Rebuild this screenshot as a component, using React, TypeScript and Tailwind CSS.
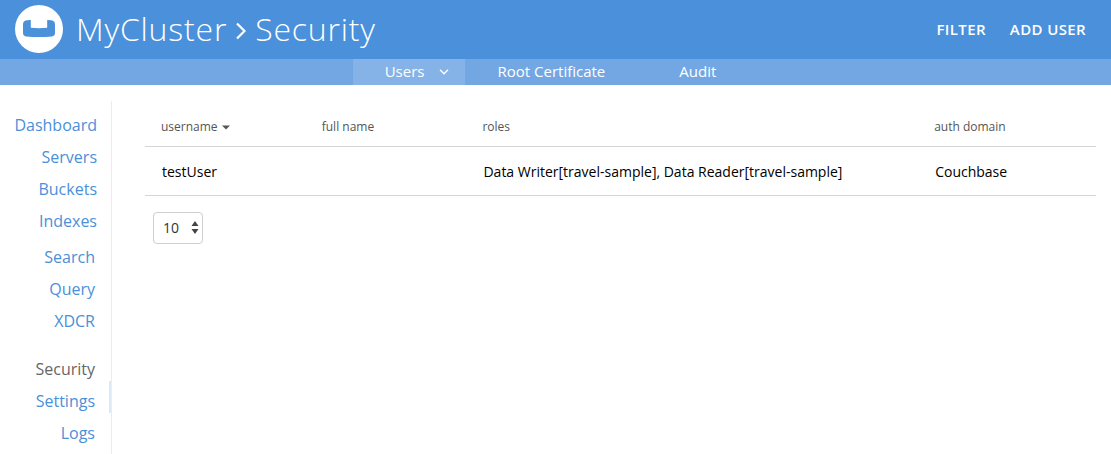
type NavItem = { label: string; current?: boolean; marked?: boolean };
type NavGroup = { spacing: string; linkPadding: string; items: NavItem[] };

const navGroups: NavGroup[] = [
  {
    spacing: "",
    linkPadding: "pr-3",
    items: [{ label: "Dashboard" }, { label: "Servers" }, { label: "Buckets" }, { label: "Indexes" }],
  },
  {
    spacing: "mt-1",
    linkPadding: "pr-[14px]",
    items: [{ label: "Search" }, { label: "Query" }, { label: "XDCR" }],
  },
  {
    spacing: "mt-4",
    linkPadding: "pr-[14px]",
    items: [{ label: "Security", current: true }, { label: "Settings", marked: true }, { label: "Logs" }],
  },
];

const users = [
  {
    username: "testUser",
    fullName: "",
    roles: "Data Writer[travel-sample], Data Reader[travel-sample]",
    domain: "Couchbase",
  },
];

function Logo() {
  return (
    <svg viewBox="0 0 48 48" className="size-12 shrink-0" role="img" aria-label="Couchbase">
      <circle cx="24" cy="24" r="24" fill="#fff" />
      <path
        d="M10.5 15.4 Q13 14.8 15.8 15 V22.8 Q24 23.6 32.2 22.8 V15 Q35 14.8 37.5 15.4 Q40 16 40 19 V28 Q40 31 37 31.4 Q24 32.6 11 31.4 Q8 31 8 28 V19 Q8 16 10.5 15.4 Z"
        fill="#4a90da"
      />
    </svg>
  );
}

function Header() {
  return (
    <header className="flex h-[59px] items-center bg-[#4a90da] pr-[25px] pb-px pl-[15px] text-white">
      <Logo />
      <h1 className="ml-[13px] flex items-center text-[32px] leading-[38px] font-light tracking-wide">
        MyCluster
        <svg
          viewBox="0 0 12 18"
          className="mx-2 mt-1 h-[18px] w-3"
          fill="none"
          stroke="#fff"
          strokeWidth="2.2"
          aria-hidden="true"
        >
          <path d="M2 1.5 L9.5 9 L2 16.5" />
        </svg>
        Security
      </h1>
      <div className="ml-auto flex gap-6 text-[15px] leading-5 font-semibold tracking-wide">
        <button type="button">FILTER</button>
        <button type="button">ADD USER</button>
      </div>
    </header>
  );
}

function Tabs() {
  return (
    <nav
      aria-label="Security sections"
      className="flex justify-center bg-[#73a7e3] pr-[6px] pb-[2px] text-[15px] leading-6 text-white"
    >
      <a href="#users" aria-current="page" className="-mb-[2px] flex items-center bg-[#85b3e7] pr-4 pb-[2px] pl-8">
        Users
        <svg
          viewBox="0 0 10 6"
          className="mt-[2px] ml-[15px] h-[6px] w-[10px]"
          fill="none"
          stroke="#fff"
          strokeWidth="1.3"
          aria-hidden="true"
        >
          <path d="M1 0.8 L5 4.8 L9 0.8" />
        </svg>
      </a>
      <a href="#root-certificate" className="pr-9 pl-8">Root Certificate</a>
      <a href="#audit" className="pr-9 pl-[38px]">Audit</a>
    </nav>
  );
}

function Sidebar() {
  return (
    <nav aria-label="Main" className="mt-4 w-28 shrink-0 border-r border-[#ececec] pt-1 text-right text-base">
      {navGroups.map((group) => (
        <ul key={group.items[0].label} className={group.spacing}>
          {group.items.map((item) => (
            <li
              key={item.label}
              className={item.marked ? "border-r-2 border-[#dce9f8]" : "border-r-2 border-transparent"}
            >
              <a
                href={"#" + item.label.toLowerCase()}
                aria-current={item.current ? "page" : undefined}
                className={
                  "block pt-2 leading-6 " + group.linkPadding + (item.current ? " text-[#666]" : " text-[#4a90da]")
                }
              >
                {item.label}
              </a>
            </li>
          ))}
        </ul>
      ))}
    </nav>
  );
}

export default function App() {
  return (
    <div className="flex min-h-screen flex-col bg-white font-['Open_Sans',sans-serif]">
      <Header />
      <Tabs />
      <div className="flex flex-1">
        <Sidebar />
        <main className="min-w-0 flex-1 pt-[22px] pr-[15px] pl-[33px]">
          <table className="w-full table-fixed border-collapse text-left">
            <colgroup>
              <col className="w-[16.9%]" />
              <col className="w-[16.9%]" />
              <col className="w-[47.5%]" />
              <col />
            </colgroup>
            <thead>
              <tr className="h-[39px] border-b border-[#d4d4d4] text-xs text-[#555]">
                <th scope="col" aria-sort="descending" className="pt-[2px] pl-4 font-normal">
                  <button type="button" className="flex items-center gap-1">
                    username
                    <svg viewBox="0 0 8 5" className="h-[5px] w-2" fill="#555" aria-hidden="true">
                      <path d="M0 0.5 H8 L4 4.5 Z" />
                    </svg>
                  </button>
                </th>
                <th scope="col" className="pt-[2px] pl-4 font-normal">full name</th>
                <th scope="col" className="pt-[2px] pl-4 font-normal">roles</th>
                <th scope="col" className="pt-[2px] pl-4 font-normal">auth domain</th>
              </tr>
            </thead>
            <tbody>
              {users.map((user) => (
                <tr key={user.username} className="h-[49px] border-b border-[#d4d4d4] text-sm text-black">
                  <td className="pt-[2px] pl-[17px]">{user.username}</td>
                  <td className="pt-[2px] pl-[17px]">{user.fullName}</td>
                  <td className="pt-[2px] pl-[17px]">{user.roles}</td>
                  <td className="pt-[2px] pl-[17px]">{user.domain}</td>
                </tr>
              ))}
            </tbody>
          </table>
          <div className="mt-4 ml-2 grid w-[50px] items-center">
            <select
              aria-label="Users per page"
              defaultValue="10"
              className="col-start-1 row-start-1 h-8 w-full appearance-none rounded border border-[#cfcfcf] bg-white pl-[9px] text-sm text-[#333]"
            >
              <option>10</option>
              <option>20</option>
              <option>50</option>
            </select>
            <svg
              viewBox="0 0 8 13"
              className="pointer-events-none col-start-1 row-start-1 mr-1 h-[13px] w-2 justify-self-end"
              fill="#444"
              aria-hidden="true"
            >
              <path d="M4 0 L7.5 5 H0.5 Z M0.5 8 H7.5 L4 13 Z" />
            </svg>
          </div>
        </main>
      </div>
    </div>
  );
}
